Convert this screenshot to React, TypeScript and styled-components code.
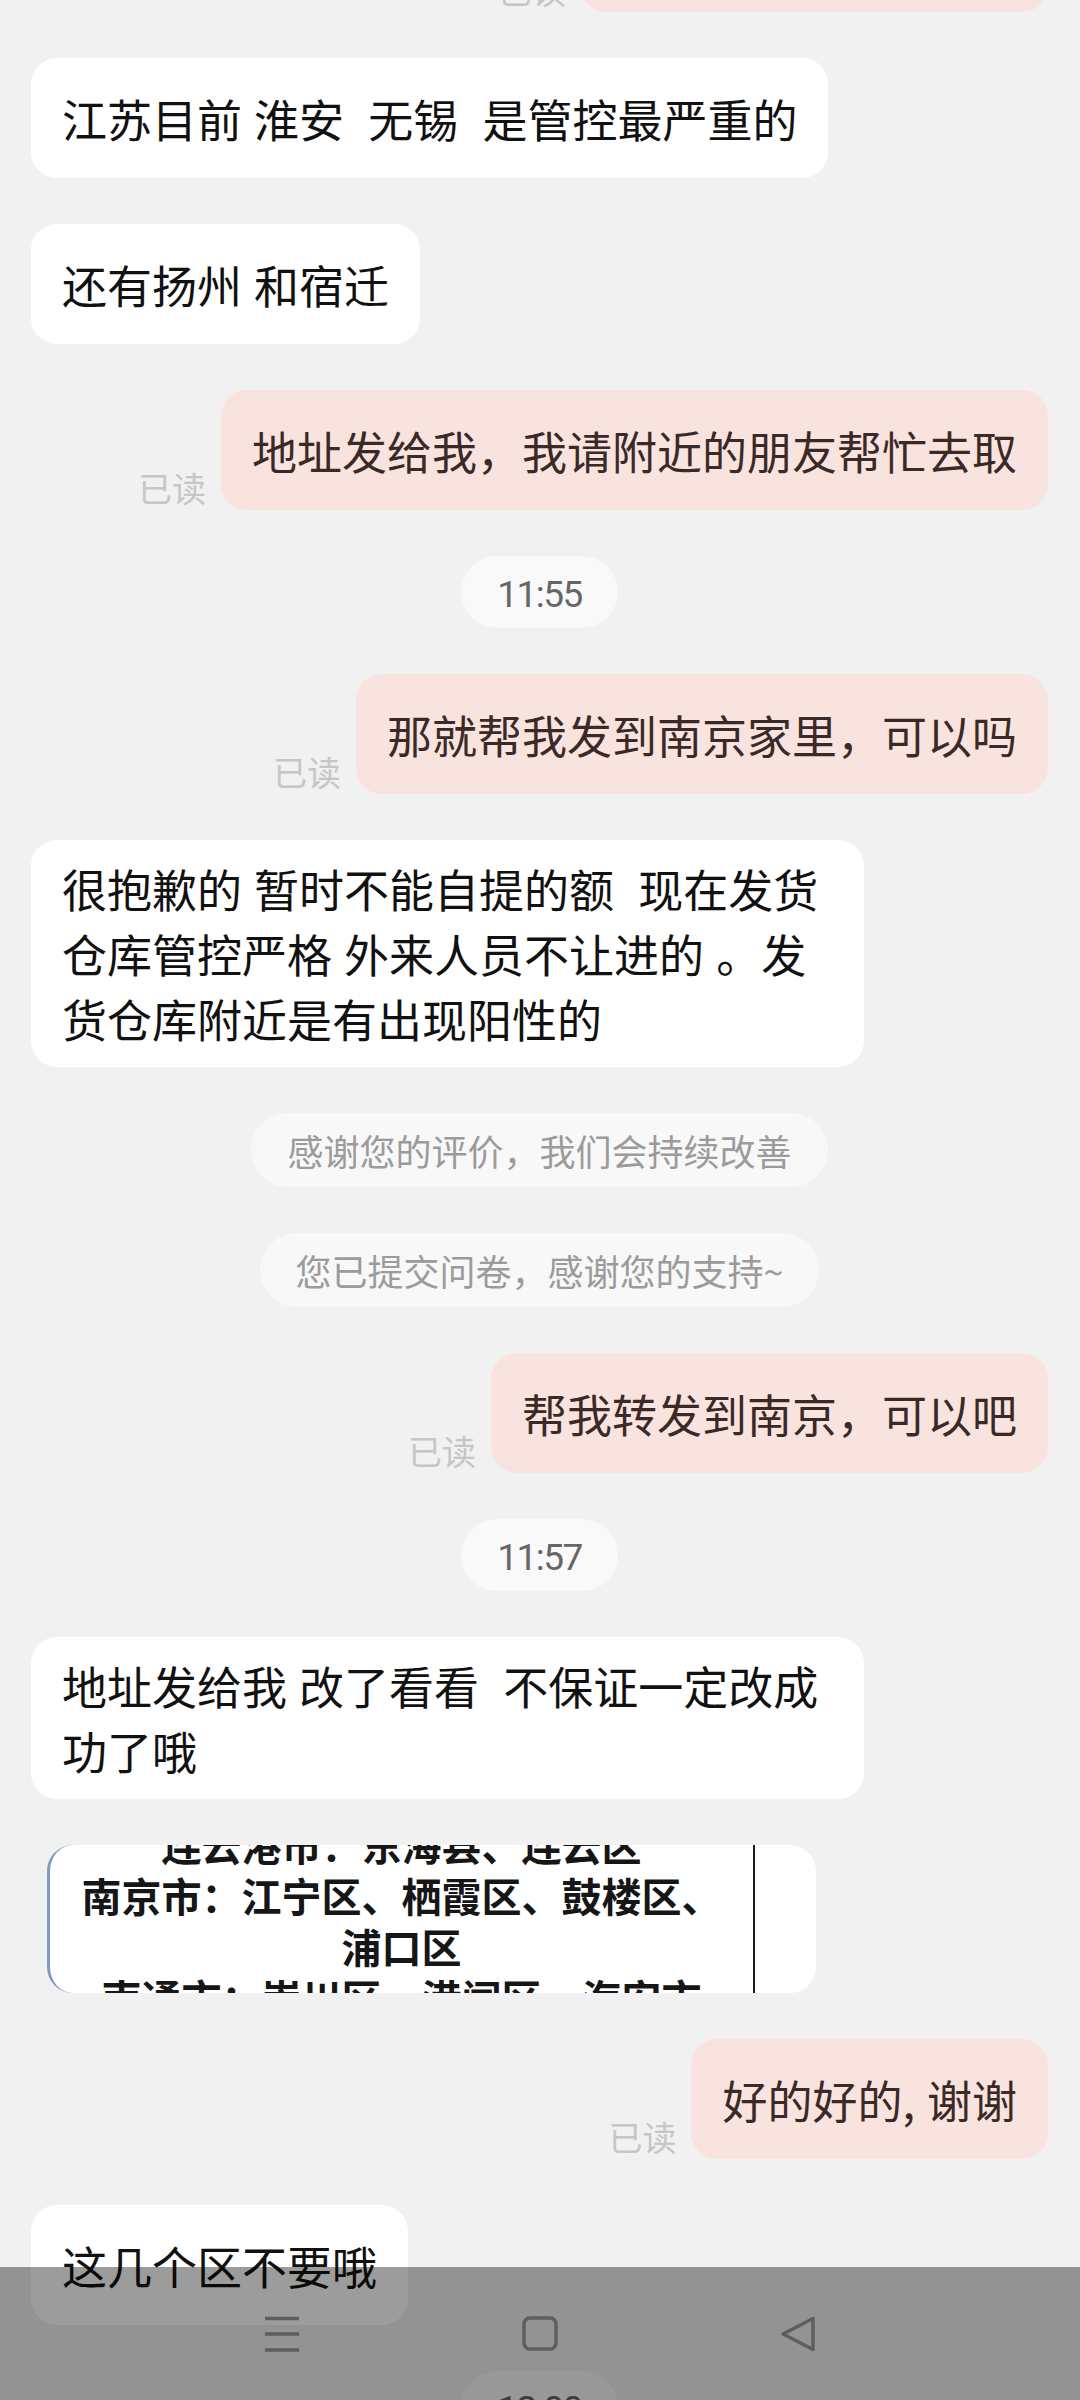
import React from "react";
import styled, { createGlobalStyle } from "styled-components";

const GlobalStyle = createGlobalStyle`
  html, body {
    margin: 0;
    padding: 0;
    overflow: hidden;
    background: #f1f1f1;
  }
  body {
    font-family: "Noto Sans CJK SC", "Noto Sans", sans-serif;
  }
  * { box-sizing: border-box; }
`;

const Screen = styled.div`
  position: relative;
  width: 1080px;
  height: 2400px;
  overflow: hidden;
  background: #f1f1f1;
`;

const ChatList = styled.div`
  display: flex;
  flex-direction: column;
  gap: 46px;
  padding: 0 32px 0 31px;
  margin-top: -108px;
`;

type Side = "left" | "right" | "center";

const Row = styled.div<{ $side: Side }>`
  display: flex;
  align-items: flex-end;
  gap: 15px;
  justify-content: ${(p) =>
    p.$side === "left" ? "flex-start" : p.$side === "right" ? "flex-end" : "center"};
`;

const Bubble = styled.div<{ $mine?: boolean }>`
  max-width: 833px;
  min-height: 120px;
  padding: 16px 31px;
  display: flex;
  align-items: center;
  border-radius: 26px;
  background: ${(p) => (p.$mine ? "#f9e3de" : "#ffffff")};
  color: ${(p) => (p.$mine ? "#3a2a27" : "#111111")};
  font-size: 45px;
  line-height: 65px;
  word-spacing: 2px;
  white-space: pre-wrap;
`;

const ReadLabel = styled.span`
  flex-shrink: 0;
  font-size: 34px;
  line-height: 34px;
  color: #c6c6c6;
  margin-bottom: 5px;
`;

const TimePill = styled.div`
  height: 72px;
  padding: 4px 36px 0;
  border-radius: 36px;
  background: #f9f9f9;
  color: #666666;
  font-family: Roboto, "Noto Sans", sans-serif;
  font-size: 37px;
  letter-spacing: -1.5px;
  display: flex;
  align-items: center;
`;

const SystemPill = styled.div`
  height: 74px;
  padding: 0 36px;
  border-radius: 37px;
  background: #f8f8f8;
  color: #9b9b9b;
  font-size: 36px;
  line-height: 52px;
  display: flex;
  align-items: center;
`;

const ImageCard = styled.div`
  margin-left: 16px;
  width: 769px;
  height: 148px;
  border-radius: 26px;
  overflow: hidden;
  background: #ffffff;
  border-left: 3px solid #7f9bc2;
  display: flex;
`;

const ScanText = styled.div`
  width: 703px;
  flex-shrink: 0;
  margin-top: -26px;
  display: flex;
  flex-direction: column;
  align-items: center;
  font-size: 40px;
  font-weight: 600;
  line-height: 51px;
  color: #161616;
  white-space: nowrap;
`;

const ScanDivider = styled.div`
  width: 2px;
  flex-shrink: 0;
  background: #1e1e1e;
`;

const ScanRest = styled.div`
  flex: 1;
`;

const NavBar = styled.nav`
  position: absolute;
  left: 0;
  right: 0;
  bottom: 0;
  height: 133px;
  background: rgba(0, 0, 0, 0.39);
  display: flex;
  justify-content: center;
  align-items: center;
  gap: 222px;
`;

const NavIcon = styled.svg`
  width: 36px;
  height: 36px;
  display: block;
  fill: none;
  stroke: #5e5e5e;
  stroke-width: 3.5;
  stroke-linecap: round;
  stroke-linejoin: round;
`;

type Msg =
  | { kind: "in"; text: string }
  | { kind: "out"; text: string }
  | { kind: "time"; text: string }
  | { kind: "system"; text: string }
  | { kind: "image"; rows: string[] };

const messages: Msg[] = [
  { kind: "out", text: "可以自己去仓库取吗" },
  { kind: "in", text: "江苏目前 淮安  无锡  是管控最严重的" },
  { kind: "in", text: "还有扬州 和宿迁" },
  { kind: "out", text: "地址发给我，我请附近的朋友帮忙去取" },
  { kind: "time", text: "11:55" },
  { kind: "out", text: "那就帮我发到南京家里，可以吗" },
  {
    kind: "in",
    text: "很抱歉的 暂时不能自提的额  现在发货仓库管控严格 外来人员不让进的 。发货仓库附近是有出现阳性的",
  },
  { kind: "system", text: "感谢您的评价，我们会持续改善" },
  { kind: "system", text: "您已提交问卷，感谢您的支持~" },
  { kind: "out", text: "帮我转发到南京，可以吧" },
  { kind: "time", text: "11:57" },
  { kind: "in", text: "地址发给我 改了看看  不保证一定改成功了哦" },
  {
    kind: "image",
    rows: [
      "连云港市：东海县、连云区",
      "南京市：江宁区、栖霞区、鼓楼区、",
      "浦口区",
      "南通市：崇川区、港闸区、海安市",
    ],
  },
  { kind: "out", text: "好的好的, 谢谢" },
  { kind: "in", text: "这几个区不要哦" },
  { kind: "time", text: "12:00" },
];

function Message({ m }: { m: Msg }) {
  switch (m.kind) {
    case "in":
      return (
        <Row $side="left">
          <Bubble>{m.text}</Bubble>
        </Row>
      );
    case "out":
      return (
        <Row $side="right">
          <ReadLabel>已读</ReadLabel>
          <Bubble $mine>{m.text}</Bubble>
        </Row>
      );
    case "time":
      return (
        <Row $side="center">
          <TimePill>{m.text}</TimePill>
        </Row>
      );
    case "system":
      return (
        <Row $side="center">
          <SystemPill>{m.text}</SystemPill>
        </Row>
      );
    case "image":
      return (
        <Row $side="left">
          <ImageCard>
            <ScanText>
              {m.rows.map((r, i) => (
                <span key={i}>{r}</span>
              ))}
            </ScanText>
            <ScanDivider />
            <ScanRest />
          </ImageCard>
        </Row>
      );
  }
}

export default function App() {
  return (
    <>
      <GlobalStyle />
      <Screen>
        <ChatList>
          {messages.map((m, i) => (
            <Message key={i} m={m} />
          ))}
        </ChatList>
        <NavBar>
          <NavIcon viewBox="0 0 36 36">
            <path d="M1 2.5H35M1 18H35M1 34H35" strokeLinecap="butt" />
          </NavIcon>
          <NavIcon viewBox="0 0 36 36">
            <rect x="2" y="2" width="32" height="31" rx="6" />
          </NavIcon>
          <NavIcon viewBox="0 0 36 36">
            <path d="M33 2.5V33.5L3 18Z" />
          </NavIcon>
        </NavBar>
      </Screen>
    </>
  );
}
